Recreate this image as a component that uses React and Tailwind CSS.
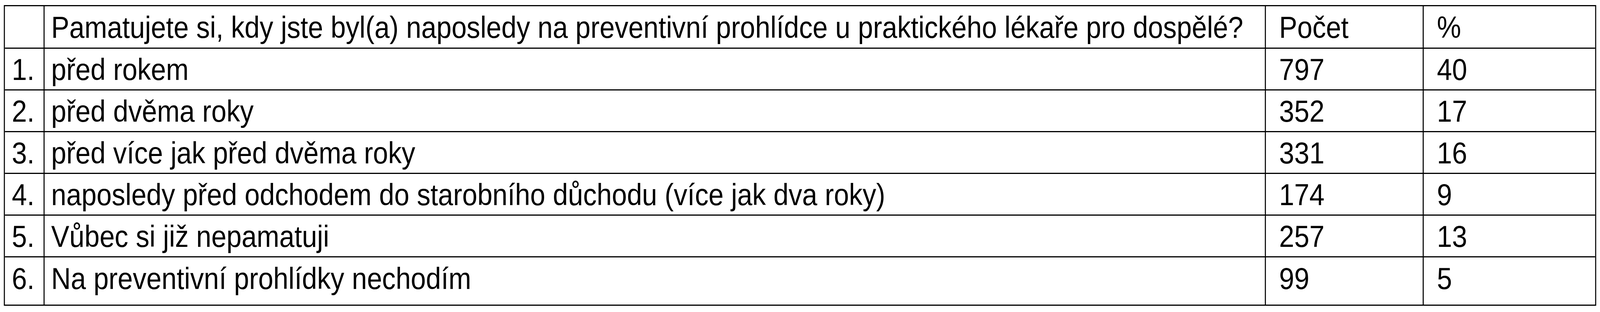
const rows = [
  { n: '1.', label: 'před rokem', count: 797, pct: 40 },
  { n: '2.', label: 'před dvěma roky', count: 352, pct: 17 },
  { n: '3.', label: 'před více jak před dvěma roky', count: 331, pct: 16 },
  { n: '4.', label: 'naposledy před odchodem do starobního důchodu (více jak dva roky)', count: 174, pct: 9 },
  { n: '5.', label: 'Vůbec si již nepamatuji', count: 257, pct: 13 },
  { n: '6.', label: 'Na preventivní prohlídky nechodím', count: 99, pct: 5 },
]

function Row({ n, label, count, pct, height, pad = 'pt-[10px]', last }) {
  return (
    <div className={`flex ${height} ${last ? '' : 'border-b-[3px] border-black'}`}>
      <div className={`w-[114px] shrink-0 border-r-[3px] border-black ${pad} pr-[26px] text-right`}>{n}</div>
      <div className={`w-[3505px] shrink-0 border-r-[3px] border-black ${pad} pl-[19px] whitespace-nowrap`}>{label}</div>
      <div className={`w-[453px] shrink-0 border-r-[3px] border-black ${pad} pl-[38px]`}>{count}</div>
      <div className={`flex-1 ${pad} pl-[38px]`}>{pct}</div>
    </div>
  )
}

export default function App() {
  return (
    // the page is drawn at the reference's 4592px width and squeezed into the window
    <div className="w-full h-[800px] overflow-hidden bg-white">
      <div className="w-[4592px] h-[800px] origin-top-left scale-x-[0.892] pt-[13px] pl-[11px] text-black font-['Liberation_Sans',Arial,sans-serif] text-[78px] leading-[87px]">
        <div className="w-[4570px] border-[3px] border-black">
          {/* Header */}
          <Row
            n=""
            label="Pamatujete si, kdy jste byl(a) naposledy na preventivní prohlídce u praktického lékaře pro dospělé?"
            count="Počet"
            pct="%"
            height="h-[109px]"
            pad="pt-[11px]"
          />
          {rows.map((r, i) => {
            const last = i === rows.length - 1
            return (
              <Row
                key={r.n}
                {...r}
                last={last}
                height={last ? 'h-[121px]' : 'h-[107px]'}
                pad={last ? 'pt-[11px]' : 'pt-[10px]'}
              />
            )
          })}
        </div>
      </div>
    </div>
  )
}
